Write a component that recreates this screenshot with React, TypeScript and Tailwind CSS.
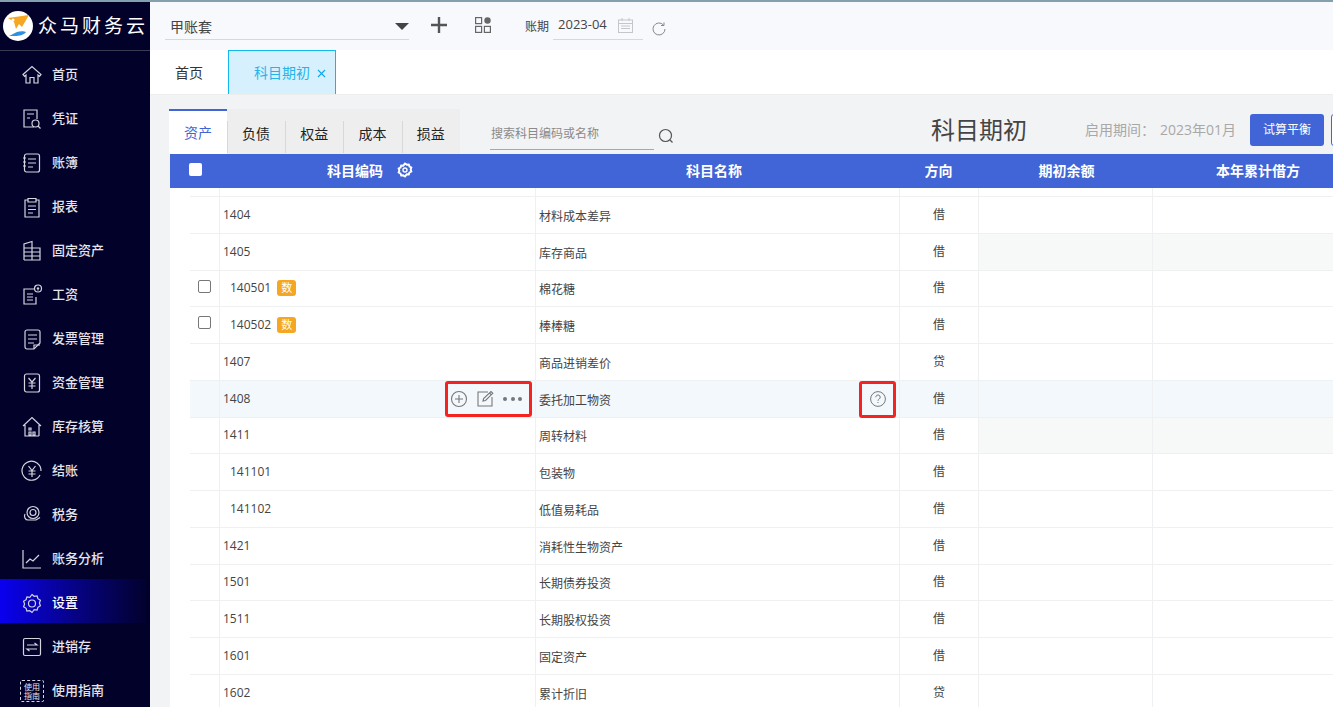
import type { ReactNode } from "react"

const font = { fontFamily: '"Open Sans", "Noto Sans CJK SC", sans-serif' }

const menu: { label: string; icon: ReactNode; active?: boolean }[] = [
  {
    label: "首页",
    icon: <path d="M2 10.500 11 2.500l9 8-1.600 1.800-1.400-1.200V19h-4v-5.500H9V19H5v-7.900l-1.400 1.200z" />,
  },
  {
    label: "凭证",
    icon: (
      <>
        <path d="M13 19H3V2h13v9" />
        <path d="M6 6h7M6 10h3" />
        <circle cx="14.500" cy="15.500" r="3.500" />
        <path d="m17 18 2.500 2.500" />
      </>
    ),
  },
  {
    label: "账簿",
    icon: (
      <>
        <rect x="3.500" y="2" width="15" height="18" rx="2" />
        <path d="M7 7h8M7 11h8M7 15h5M2 6h3M2 10h3M2 14h3" />
      </>
    ),
  },
  {
    label: "报表",
    icon: (
      <>
        <path d="M7 4H4v17h14V4h-3" />
        <path d="M7 2.500h8V6H7zM7 10h8M7 13.500h8M7 17h5" />
      </>
    ),
  },
  {
    label: "固定资产",
    icon: <path d="M3 20V4l8-2.500V20M11 8h8v12H3M3 8h8M3 12h8M3 16h8M11 12h8M11 16h8" />,
  },
  {
    label: "工资",
    icon: (
      <>
        <path d="M13 5H3v15h12v-7" />
        <path d="M6 10h6M6 13h6M6 16h6" />
        <circle cx="17" cy="4.500" r="3.500" />
        <path d="M17 3v3.500M15.800 4.500h2.400" />
      </>
    ),
  },
  {
    label: "发票管理",
    icon: (
      <>
        <path d="M13 21H6a2 2 0 0 1-2-2V4a2 2 0 0 1 2-2h11a2 2 0 0 1 2 2v11z" />
        <path d="M7 7h9M7 11h9M7 15h6M13 21v-4h6" />
      </>
    ),
  },
  {
    label: "资金管理",
    icon: (
      <>
        <rect x="3.500" y="2" width="15" height="18" rx="2" />
        <path d="m7.500 6 3.500 4 3.500-4M11 10v7M7.500 11h7M7.500 14h7" />
      </>
    ),
  },
  {
    label: "库存核算",
    icon: (
      <>
        <path d="M2 10 11 1.500l9 8.500M4 9v11h2M18 9v11" />
        <path d="M8 12h2v2H8zM8 16h2v3H8zM12 16h2v3h-2zM6 20h12" />
      </>
    ),
  },
  {
    label: "结账",
    icon: (
      <>
        <path d="M19 15a9.500 9.500 0 1 1 1-4" />
        <path d="m7.500 6 3.500 4.500L14.500 6M11 10.500V17M7.500 11h7M7.500 14h7" />
      </>
    ),
  },
  {
    label: "税务",
    icon: (
      <>
        <circle cx="12" cy="8.500" r="6" />
        <circle cx="12" cy="8.500" r="3" />
        <path d="M4 10c-1.500 3 .5 6 3 6h8l4-2.500" />
      </>
    ),
  },
  {
    label: "账务分析",
    icon: <path d="M2 2v18h18M5 15l4-4 3 2 6-6" />,
  },
  {
    label: "设置",
    active: true,
    icon: (
      <>
        <path d="m11 2.500 2.200 1.800 2.900-.3.800 2.700 2.500 1.500-1 2.800 1 2.800-2.500 1.500-.8 2.700-2.900-.3L11 20.500l-2.200-1.800-2.900.3-.8-2.700-2.500-1.500 1-2.800-1-2.800 2.500-1.500.8-2.700 2.900.3z" />
        <circle cx="11" cy="11.500" r="3.500" />
      </>
    ),
  },
  {
    label: "进销存",
    icon: (
      <>
        <rect x="2.500" y="2.500" width="17" height="17" rx="1.500" />
        <path d="M6 9h10l-2.500-2M16 13H6l2.500 2" />
      </>
    ),
  },
]

type Row = { code: string; name: string; dir: string; sub?: boolean; qty?: boolean; shade?: boolean; hover?: boolean }

const rows: Row[] = [
  { code: "1404", name: "材料成本差异", dir: "借" },
  { code: "1405", name: "库存商品", dir: "借", shade: true },
  { code: "140501", name: "棉花糖", dir: "借", sub: true, qty: true },
  { code: "140502", name: "棒棒糖", dir: "借", sub: true, qty: true },
  { code: "1407", name: "商品进销差价", dir: "贷" },
  { code: "1408", name: "委托加工物资", dir: "借", hover: true },
  { code: "1411", name: "周转材料", dir: "借", shade: true },
  { code: "141101", name: "包装物", dir: "借", sub: true },
  { code: "141102", name: "低值易耗品", dir: "借", sub: true },
  { code: "1421", name: "消耗性生物资产", dir: "借" },
  { code: "1501", name: "长期债券投资", dir: "借" },
  { code: "1511", name: "长期股权投资", dir: "借" },
  { code: "1601", name: "固定资产", dir: "借" },
  { code: "1602", name: "累计折旧", dir: "贷" },
]

function Logo() {
  return (
    <svg width="30" height="30" viewBox="0 0 30 30" className="shrink-0">
      <circle cx="15" cy="15" r="15" fill="#fff" />
      <path d="M5 7 26 4l-7 12-3-3-3 5-2-7z" fill="#f5a623" />
      <circle cx="10" cy="9" r="1.500" fill="#fff" />
      <path d="M6 25c3-1 5-3 8-4 3-1 7-1 9 0-2 3-7 4-11 4z" fill="#2f8fe0" />
    </svg>
  )
}

function Sidebar() {
  return (
    <aside className="flex h-full w-[150px] shrink-0 flex-col bg-[#02012a]">
      <div className="flex h-[49px] shrink-0 items-center gap-[5px] border-b border-[#3a3a55] pl-[3px]">
        <Logo />
        <span className="whitespace-nowrap text-[19px] tracking-[3px] text-white">众马财务云</span>
      </div>
      <nav className="flex flex-col">
        {menu.map((item) => (
          <div
            key={item.label}
            className={
              item.active
                ? "flex h-[44px] items-center gap-[9px] bg-gradient-to-r from-[#0a00f0] to-[#02012a] pl-[21px] pt-[4px] text-[13px] font-medium text-white"
                : "flex h-[44px] items-center gap-[9px] pl-[21px] pt-[4px] text-[13px] font-medium text-[#e4e4ea]"
            }
          >
            <svg width="22" height="22" viewBox="0 0 22 22" fill="none" stroke="#d5d5de" strokeWidth="1.200">
              {item.icon}
            </svg>
            <span>{item.label}</span>
          </div>
        ))}
        <div className="flex h-[44px] items-center gap-[8px] pl-[20px] pt-[4px] text-[13px] font-medium text-[#e4e4ea]">
          <div className="flex h-[22px] w-[24px] flex-col items-center justify-center rounded-[2px] border border-dashed border-[#d5d5de] text-[8px] font-normal leading-[9px]">
            <span>使用</span>
            <span>指南</span>
          </div>
          <span>使用指南</span>
        </div>
      </nav>
    </aside>
  )
}

function TopBar() {
  return (
    <div className="flex h-[48px] shrink-0 items-start bg-[#f8f9fd] pl-[15px] text-[#444]">
      <div className="mt-[10px] flex h-[28px] w-[244px] items-center justify-between border-b border-[#d5d8de] pl-[5px] text-[14px]">
        <span className="mt-[1px]">甲账套</span>
        <span className="mt-[1px] h-0 w-0 border-x-[7px] border-t-[7px] border-x-transparent border-t-[#444]" />
      </div>
      <svg width="16" height="16" viewBox="0 0 16 16" className="ml-[22px] mt-[15px]" fill="#555">
        <path d="M6.800 0h2.400v6.800H16v2.400H9.200V16H6.800V9.200H0V6.800h6.800z" />
      </svg>
      <svg width="16" height="16" viewBox="0 0 16 16" className="ml-[28px] mt-[15px]" fill="none" stroke="#666" strokeWidth="1.200">
        <rect x="0.600" y="0.600" width="6" height="6" />
        <circle cx="12.500" cy="3.500" r="3.200" fill="#666" stroke="none" />
        <rect x="0.600" y="9.400" width="6" height="6" />
        <rect x="9.400" y="9.400" width="6" height="6" />
      </svg>
      <span className="ml-[34px] mt-[17px] text-[12px] leading-[16px]">账期</span>
      <div className="ml-[4px] mt-[10px] flex h-[28px] w-[90px] items-center border-b border-[#d5d8de] pl-[5px]">
        <span className="mb-[2px] text-[13px]">2023-04</span>
        <svg width="15" height="15" viewBox="0 0 15 15" className="ml-[11px]" fill="none" stroke="#c4c6cc" strokeWidth="1">
          <rect x="0.500" y="2" width="14" height="12.500" />
          <path d="M0.500 5.500h14M4 0v3M11 0v3M3 8h9M3 10.500h9" />
        </svg>
      </div>
      <svg width="14" height="14" viewBox="0 0 14 14" className="ml-[9px] mt-[20px]" fill="none" stroke="#888" strokeWidth="1">
        <path d="M11.500 3A6 6 0 1 0 13 7M12 0.500V3.500H9" />
      </svg>
    </div>
  )
}

function PageTabs() {
  return (
    <div className="flex h-[45px] shrink-0 items-stretch border-b border-[#eceded] bg-white">
      <div className="flex w-[78px] items-center pl-[25px] text-[14px] text-[#333]">首页</div>
      <div className="flex w-[108px] items-center border border-b-0 border-[#10b8ee] bg-[#d6f0fe] pl-[25px] text-[14px] text-[#25b4ea]">
        <span>科目期初</span>
        <svg width="9" height="9" viewBox="0 0 9 9" className="ml-[7px] mt-[2px]" stroke="#10a8e8" strokeWidth="1.100">
          <path d="m1 1 7 7M8 1 1 8" />
        </svg>
      </div>
    </div>
  )
}

function SectionTabs() {
  const labels = ["负债", "权益", "成本", "损益"]
  return (
    <div className="flex h-[45px] w-[291px] shrink-0 bg-[#eeeeee] text-[14px] text-[#222]">
      <div className="flex w-[58px] items-center justify-center border-t-2 border-[#4165d6] bg-white text-[#4165d6]">资产</div>
      {labels.map((label) => (
        <div key={label} className="relative flex w-[58.500px] items-center justify-center pt-[4px]">
          <span className="absolute bottom-[1px] left-0 top-[12px] w-px bg-[#d8d8d8]" />
          {label}
        </div>
      ))}
    </div>
  )
}

function Toolbar() {
  return (
    <div className="flex h-[45px] w-[1300px] shrink-0 items-start whitespace-nowrap">
      <SectionTabs />
      <div className="ml-[30px] mt-[10px] flex h-[31px] w-[164px] shrink-0 items-center border-b border-[#a8a8a8] pl-[1px] text-[12px] text-[#8a8a8a]">
        搜索科目编码或名称
      </div>
      <svg width="16" height="16" viewBox="0 0 16 16" className="ml-[4px] mt-[19px] shrink-0" fill="none" stroke="#555" strokeWidth="1.200">
        <circle cx="7.500" cy="7.500" r="6" />
        <path d="m12 12 2.500 2.500" />
      </svg>
      <h1 className="ml-[257px] mt-[3px] shrink-0 text-[24px] leading-[36px] text-[#444]">科目期初</h1>
      <span className="ml-[58px] mt-[11px] shrink-0 text-[14px] leading-[20px] text-[#a8a8a8]">启用期间：</span>
      <span className="ml-[5px] mt-[11px] shrink-0 text-[14px] leading-[20px] text-[#a8a8a8]">2023年01月</span>
      <button className="ml-[14px] mt-[5px] h-[32px] w-[74px] shrink-0 rounded-[3px] bg-[#4165d6] text-[12px] text-white">试算平衡</button>
      <button className="ml-[7px] mt-[5px] h-[32px] w-[74px] shrink-0 rounded-[3px] border border-[#4165d6] bg-white" />
    </div>
  )
}

function TableHeader() {
  return (
    <div className="flex h-[34px] shrink-0 items-center whitespace-nowrap bg-[#4165d6] pb-[2px] text-[14px] font-bold text-white">
      <div className="flex w-[50px] justify-center">
        <span className="mb-[1px] h-[13px] w-[13px] rounded-[2px] bg-white" />
      </div>
      <div className="flex w-[316px] items-center justify-center gap-[14px] pr-[16px]">
        <span>科目编码</span>
        <svg width="16" height="16" viewBox="0 0 16 16" fill="none" stroke="#fff">
          <path d="m8 1.500 1.800 1.200 2-.2.700 2 1.800 1-.6 2 .6 2-1.800 1-.7 2-2-.2L8 14.500l-1.800-1.200-2 .2-.7-2-1.800-1 .6-2-.6-2 1.800-1 .7-2 2 .2z" strokeWidth="2" />
          <circle cx="8" cy="8" r="2" strokeWidth="1.400" />
        </svg>
      </div>
      <div className="w-[364px] pr-[8px] text-center">科目名称</div>
      <div className="w-[79px] pr-[2px] text-center">方向</div>
      <div className="w-[174px] pl-[1px] text-center">期初余额</div>
      <div className="w-[212px] pr-[2px] text-center">本年累计借方</div>
    </div>
  )
}

function RowActions() {
  return (
    <div className="absolute right-[3px] top-0 flex h-[36px] w-[87px] items-center rounded-[3px] border-[3px] border-[#f52222] pl-[2px]">
      <svg width="18" height="18" viewBox="0 0 18 18" fill="none" stroke="#777" strokeWidth="1.100">
        <circle cx="9" cy="9" r="7.500" />
        <path d="M9 5v8M5 9h8" />
      </svg>
      <svg width="18" height="18" viewBox="0 0 18 18" className="ml-[8px]" fill="none" stroke="#777" strokeWidth="1.100">
        <path d="M12 2H2v14h14V7" />
        <path d="m7 11 .6-2.500L15 1.500l1.800 1.800-7.300 7.200zM13.500 3l1.800 1.800" />
      </svg>
      <span className="ml-[9px] flex gap-[3.500px]">
        <span className="h-[4px] w-[4px] rounded-full bg-[#777]" />
        <span className="h-[4px] w-[4px] rounded-full bg-[#777]" />
        <span className="h-[4px] w-[4px] rounded-full bg-[#777]" />
      </span>
    </div>
  )
}

function TableRow({ row }: { row: Row }) {
  const cell = "h-full shrink-0 border-r border-[#eef0f1]"
  const tint = row.shade ? "bg-[#f7f8f8]" : ""
  return (
    <div className={row.hover ? "flex h-[36.750px] shrink-0 border-b border-[#eef0f1] bg-[#f3f8fc]" : "flex h-[36.750px] shrink-0 border-b border-[#eef0f1]"}>
      <div className={`${cell} flex w-[30px] justify-center pt-[9px]`}>
        {row.qty && <span className="h-[13px] w-[13px] rounded-[2px] border border-[#777] bg-white" />}
      </div>
      <div className={`${cell} relative flex w-[316px] items-center gap-[6px] text-[12px] text-[#444] ${row.sub ? "pl-[10px]" : "pl-[3px]"}`}>
        <span>{row.code}</span>
        {row.qty && (
          <span className="flex h-[16px] w-[19px] items-center justify-center rounded-[3px] bg-[#f5a623] text-[11px] text-white">数</span>
        )}
        {row.hover && <RowActions />}
      </div>
      <div className={`${cell} relative flex w-[364px] items-center pl-[3px] pt-[4px] text-[12px] text-[#444]`}>
        <span>{row.name}</span>
        {row.hover && (
          <div className="absolute right-[3px] top-0 flex h-[37px] w-[37px] items-center justify-center rounded-[3px] border-[3px] border-[#f52222]">
            <svg width="16" height="16" viewBox="0 0 16 16" fill="none" stroke="#777" strokeWidth="1">
              <circle cx="8" cy="8" r="7.400" />
              <path d="M5.800 6.200a2.200 2.200 0 1 1 3.400 1.800c-.8.500-1.200 1-1.200 1.800M8 11v1" />
            </svg>
          </div>
        )}
      </div>
      <div className={`${cell} flex w-[79px] items-center justify-center text-[12px] text-[#444]`}>{row.dir}</div>
      <div className={`${cell} w-[174px] ${tint}`} />
      <div className={`h-full w-[212px] ${tint}`} />
    </div>
  )
}

export default function App() {
  return (
    <div className="flex h-[707px] w-[1333px] flex-col overflow-hidden" style={font}>
      <div className="h-[2px] shrink-0 bg-[#84a0ae]" />
      <div className="flex min-h-0 flex-1">
        <Sidebar />
        <main className="flex min-w-0 flex-1 flex-col overflow-hidden bg-[#f2f3f5]">
          <TopBar />
          <PageTabs />
          <div className="flex min-h-0 flex-1 flex-col pl-[19px] pt-[14px]">
            <Toolbar />
            <div className="ml-[1px] flex min-h-0 w-[1195px] flex-1 flex-col overflow-hidden bg-white">
              <TableHeader />
              <div className="ml-[20px] flex flex-col">
                <div className="flex h-[9px] shrink-0 border-b border-[#eef0f1]">
                  <div className="w-[30px] shrink-0 border-r border-[#eef0f1]" />
                  <div className="w-[316px] shrink-0 border-r border-[#eef0f1]" />
                  <div className="w-[364px] shrink-0 border-r border-[#eef0f1]" />
                  <div className="w-[79px] shrink-0 border-r border-[#eef0f1]" />
                  <div className="w-[174px] shrink-0 border-r border-[#eef0f1]" />
                </div>
                {rows.map((row) => (
                  <TableRow key={row.code} row={row} />
                ))}
              </div>
            </div>
          </div>
        </main>
      </div>
    </div>
  )
}
